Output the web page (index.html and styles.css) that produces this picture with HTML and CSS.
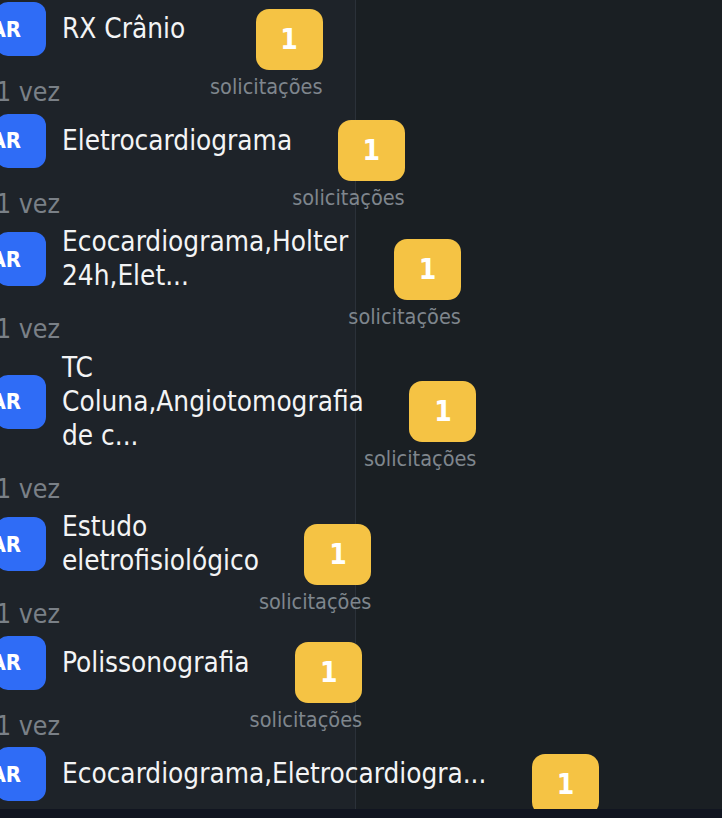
FILE: index.html
```html
<!DOCTYPE html>
<html lang="pt-BR">
<head>
<meta charset="utf-8">
<title>Solicitações</title>
<link rel="stylesheet" href="styles.css">
</head>
<body>
<div class="app">
  <main class="main">
    <section class="list-pane">
      <ul class="list">
        <li class="item">
          <div class="item-main">
            <div class="item-head">
              <button class="btn">AR</button>
              <div class="title">RX Crânio</div>
            </div>
            <div class="count">1 vez</div>
          </div>
          <div class="stat"><span class="badge">1</span><span class="stat-label">solicitações</span></div>
        </li>
        <li class="item">
          <div class="item-main">
            <div class="item-head">
              <button class="btn">AR</button>
              <div class="title">Eletrocardiograma</div>
            </div>
            <div class="count">1 vez</div>
          </div>
          <div class="stat"><span class="badge">1</span><span class="stat-label">solicitações</span></div>
        </li>
        <li class="item">
          <div class="item-main">
            <div class="item-head">
              <button class="btn">AR</button>
              <div class="title">Ecocardiograma,Holter<br>24h,Elet...</div>
            </div>
            <div class="count">1 vez</div>
          </div>
          <div class="stat"><span class="badge">1</span><span class="stat-label">solicitações</span></div>
        </li>
        <li class="item">
          <div class="item-main">
            <div class="item-head">
              <button class="btn">AR</button>
              <div class="title">TC<br>Coluna,Angiotomografia<br>de c...</div>
            </div>
            <div class="count">1 vez</div>
          </div>
          <div class="stat"><span class="badge">1</span><span class="stat-label">solicitações</span></div>
        </li>
        <li class="item">
          <div class="item-main">
            <div class="item-head">
              <button class="btn">AR</button>
              <div class="title">Estudo<br>eletrofisiológico</div>
            </div>
            <div class="count">1 vez</div>
          </div>
          <div class="stat"><span class="badge">1</span><span class="stat-label">solicitações</span></div>
        </li>
        <li class="item">
          <div class="item-main">
            <div class="item-head">
              <button class="btn">AR</button>
              <div class="title">Polissonografia</div>
            </div>
            <div class="count">1 vez</div>
          </div>
          <div class="stat"><span class="badge">1</span><span class="stat-label">solicitações</span></div>
        </li>
        <li class="item">
          <div class="item-main">
            <div class="item-head">
              <button class="btn">AR</button>
              <div class="title">Ecocardiograma,Eletrocardiogra...</div>
            </div>
            <div class="count">1 vez</div>
          </div>
          <div class="stat"><span class="badge">1</span><span class="stat-label">solicitações</span></div>
        </li>
      </ul>
    </section>
    <section class="detail-pane"></section>
  </main>
  <footer class="bottom-bar"></footer>
</div>
</body>
</html>
```
FILE: styles.css
```css
* { box-sizing: border-box; }
html, body {
  margin: 0;
  padding: 0;
  width: 722px;
  height: 818px;
  overflow: hidden;
  background: #1b1f23;
}
body {
  font-family: "DejaVu Sans Condensed", "DejaVu Sans", sans-serif;
  font-stretch: condensed;
}
.app {
  display: flex;
  flex-direction: column;
  height: 818px;
}
.main {
  display: flex;
  height: 809px;
  overflow: hidden;
}
.list-pane {
  position: relative;
  z-index: 1;
  width: 356px;
  flex: none;
  background: #1e2329;
  border-right: 1px solid #2b3139;
}
.detail-pane {
  flex: 1;
  background: #1a1f23;
}
.bottom-bar {
  height: 9px;
  background: #111520;
}
.list {
  list-style: none;
  margin: 2px 0 0 -4px;
  padding: 0;
}
.item {
  display: flex;
  align-items: center;
  margin-bottom: 7.5px;
}
.item-main {
  display: flex;
  flex-direction: column;
}
.item-head {
  display: flex;
  align-items: center;
  gap: 16px;
  min-height: 54px;
}
.btn {
  flex: none;
  width: 50px;
  height: 54px;
  border: 0;
  border-radius: 12px;
  background: #2f6cf6;
  color: #ffffff;
  font-family: "DejaVu Sans Condensed", "DejaVu Sans", sans-serif;
  font-stretch: condensed;
  font-weight: bold;
  font-size: 22px;
  display: flex;
  align-items: center;
  justify-content: flex-end;
  padding: 0 25px 0 0;
  white-space: nowrap;
}
.title {
  min-width: 148px;
  width: max-content;
  font-size: 27.7px;
  line-height: 34px;
  color: #f3f4f5;
  white-space: nowrap;
}
.count {
  margin-top: 21px;
  font-size: 26.5px;
  line-height: 29px;
  color: #7a8087;
}
.stat {
  display: flex;
  flex-direction: column;
  align-items: flex-end;
}
.badge {
  width: 67px;
  height: 61px;
  border-radius: 13px;
  background: #f5c344;
  color: #ffffff;
  font-weight: bold;
  font-size: 28px;
  display: flex;
  align-items: center;
  justify-content: center;
}
.stat-label {
  margin-top: 4px;
  font-size: 21.5px;
  line-height: 26px;
  color: #7f868d;
}
```
